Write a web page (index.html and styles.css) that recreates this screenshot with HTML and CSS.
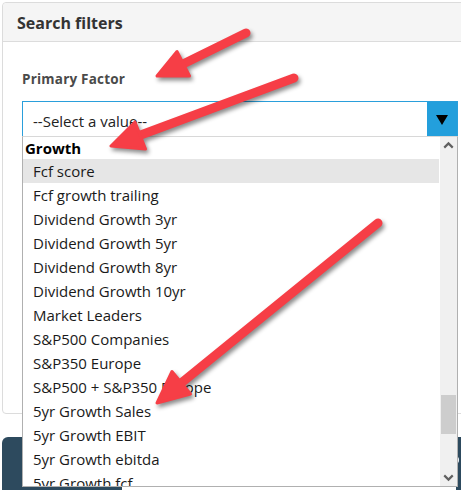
FILE: index.html
```html
<!DOCTYPE html>
<html>
<head>
<meta charset="utf-8">
<link rel="stylesheet" href="styles.css">
</head>
<body>
<div class="page">
  <div class="card">
    <div class="card-header">Search filters</div>
    <div class="card-body">
      <div class="field-label">Primary Factor</div>
      <div class="select">
        <span class="select-text">--Select a value--</span>
        <span class="select-btn"><span class="tri"></span></span>
      </div>
    </div>
  </div>
  <div class="action-row">
    <div class="btn-dark left"></div>
    <div class="btn-dark right"><span class="dot"></span></div>
  </div>

  <div class="listbox">
    <div class="options">
      <div class="group">Growth</div>
      <div class="opt hl">Fcf score</div>
      <div class="opt">Fcf growth trailing</div>
      <div class="opt">Dividend Growth 3yr</div>
      <div class="opt">Dividend Growth 5yr</div>
      <div class="opt">Dividend Growth 8yr</div>
      <div class="opt">Dividend Growth 10yr</div>
      <div class="opt">Market Leaders</div>
      <div class="opt">S&amp;P500 Companies</div>
      <div class="opt">S&amp;P350 Europe</div>
      <div class="opt">S&amp;P500 + S&amp;P350 Europe</div>
      <div class="opt">5yr Growth Sales</div>
      <div class="opt">5yr Growth EBIT</div>
      <div class="opt">5yr Growth ebitda</div>
      <div class="opt">5yr Growth fcf</div>
    </div>
    <div class="scrollbar">
      <svg class="sb-arrow" width="16" height="16" viewBox="0 0 16 16"><path d="M4 10 L8 6 L12 10" fill="none" stroke="#606060" stroke-width="2"/></svg>
      <div class="sb-track"><div class="sb-thumb"></div></div>
      <svg class="sb-arrow" width="16" height="16" viewBox="0 0 16 16"><path d="M4 6 L8 10 L12 6" fill="none" stroke="#606060" stroke-width="2"/></svg>
    </div>
  </div>

  <svg class="arrows" width="461" height="490" viewBox="0 0 461 490">
    <g class="arrow">
      <line x1="246" y1="33" x2="181" y2="65" />
      <polygon points="157,76 189.5,76 177,51.5" />
    </g>
    <g class="arrow">
      <line x1="294" y1="78" x2="138" y2="136" />
      <polygon points="111,146 145.5,149 135,122" />
    </g>
    <g class="arrow">
      <line x1="378" y1="223" x2="180" y2="384" />
      <polygon points="157,403 190.5,394 172,371.5" />
    </g>
  </svg>
</div>
</body>
</html>
```

FILE: styles.css
```css
html, body {
  margin: 0;
  padding: 0;
  background: #ffffff;
}

.page {
  position: relative;
  width: 461px;
  height: 490px;
  overflow: hidden;
  font-family: "Open Sans", "Noto Sans", sans-serif;
  color: #333;
}

.card {
  margin: 2px 0 0 2px;
  width: 480px;
  height: 412px;
  border: 1px solid #dcdcdc;
  border-radius: 4px;
  box-sizing: border-box;
  background: #fff;
}

.card-header {
  height: 39px;
  box-sizing: border-box;
  background: #f5f5f5;
  border-bottom: 1px solid #dcdcdc;
  padding: 9px 0 0 14px;
  font-weight: 700;
  font-size: 16px;
  line-height: 22px;
  color: #333;
  border-radius: 4px 4px 0 0;
}

.card-body {
  padding: 28px 0 0 19px;
}

.field-label {
  font-weight: 700;
  font-size: 13.5px;
  line-height: 18px;
  color: #4a4a4a;
  letter-spacing: 0.2px;
}

.select {
  margin-top: 13px;
  width: 436px;
  height: 36px;
  box-sizing: border-box;
  border: 1px solid #2a9fdb;
  display: flex;
  align-items: center;
  background: #fff;
}

.select-text {
  flex: 1;
  padding-left: 10px;
  font-family: "Open Sans", "Noto Sans", sans-serif;
  font-size: 15px;
  color: #222;
  padding-top: 3px;
}

.select-btn {
  width: 30px;
  height: 100%;
  background: #239fdc;
  display: flex;
  align-items: center;
  justify-content: center;
}

.tri {
  width: 0;
  height: 0;
  border-left: 6px solid transparent;
  border-right: 6px solid transparent;
  border-top: 10px solid #000;
  margin-top: 2px;
}

.action-row {
  margin-top: 23px;
  display: flex;
  justify-content: space-between;
}

.btn-dark {
  height: 60px;
  background: #2d4a5e;
}

.btn-dark.left {
  margin-left: 2px;
  width: 120px;
  border-radius: 6px 0 0 0;
}

.btn-dark.right {
  width: 5px;
  position: relative;
}

.dot {
  position: absolute;
  left: 0;
  top: 20px;
  width: 3px;
  height: 6px;
  background: #e8eef5;
  border-radius: 0 2px 2px 0;
}

.listbox {
  position: absolute;
  left: 22px;
  top: 136px;
  width: 436px;
  height: 351px;
  box-sizing: border-box;
  border: 1px solid #b0b0b0;
  border-top-color: #d8d8d8;
  background: #fff;
  display: flex;
  overflow: hidden;
}

.options {
  flex: 1;
  font-family: "Open Sans", "Noto Sans", sans-serif;
  font-size: 15px;
  color: #1a1a1a;
  padding-right: 1px;
}

.group {
  height: 22px;
  line-height: 22px;
  padding-left: 2px;
  font-weight: 700;
  color: #000;
}

.opt {
  height: 24px;
  line-height: 24px;
  padding-left: 10px;
  white-space: nowrap;
}

.opt.hl {
  background: #e6e6e6;
}

.scrollbar {
  width: 17px;
  background: #f0f0f0;
  display: flex;
  flex-direction: column;
}

.sb-arrow {
  display: block;
  width: 17px;
  height: 17px;
  flex: none;
}

.sb-track {
  flex: 1;
  position: relative;
}

.sb-thumb {
  position: absolute;
  left: 1px;
  right: 1px;
  top: 241px;
  height: 39px;
  background: #cdcdcd;
}

.arrows {
  position: absolute;
  left: 0;
  top: 0;
  pointer-events: none;
  filter: drop-shadow(2px 3px 2px rgba(0, 0, 0, 0.45));
}

.arrow line {
  stroke: #f63e46;
  stroke-width: 9;
  stroke-linecap: round;
}

.arrow polygon {
  fill: #f63e46;
  stroke: #f63e46;
  stroke-width: 3;
  stroke-linejoin: round;
}
```
